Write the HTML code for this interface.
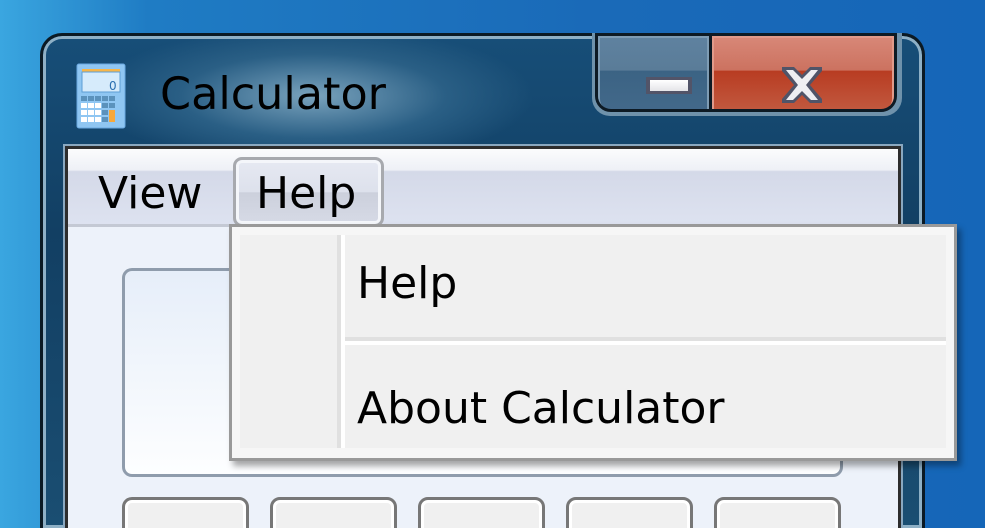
<!DOCTYPE html>
<html style="width:985px;height:528px;overflow:hidden"><head><style>
*{margin:0;padding:0;box-sizing:border-box}
body{width:985px;height:528px;overflow:hidden;position:relative;background:linear-gradient(90deg,#3aa6e0 0%,#1f7cc4 15%,#1a6ab8 60%,#1566b8 100%);font-family:"Liberation Sans","DejaVu Sans",sans-serif}
.abs{position:absolute}
.win{left:40px;top:33px;width:885px;height:495px;border:3px solid #0b1a24;border-bottom:0;border-radius:22px 22px 0 0;background:radial-gradient(ellipse 220px 70px at 270px 60px,#7aa3bd 0%,#2a5f85 60%,transparent 100%),linear-gradient(180deg,#174e78,#123f63 40%,#1a4e72);box-shadow:inset 0 0 0 3px #8eb0c6}
.title{left:160px;top:69px;font-family:"DejaVu Sans",sans-serif;font-size:44.5px;color:#000}
.client{left:65px;top:146px;width:836px;height:382px;border:3px solid #2d2d2d;border-bottom:0;background:#edf2fa;box-shadow:0 0 0 2px #8aa8c0;overflow:hidden}
.menubar{left:0;top:0;width:830px;height:78px;background:linear-gradient(180deg,#fbfcfd 0%,#eef0f6 28%,#d4d9e8 30%,#dde2f0 100%);border-bottom:3px solid #c4c9d4}
.mtxt{font-family:"DejaVu Sans",sans-serif;font-size:44px;color:#000;white-space:nowrap}
.drop{left:229px;top:224px;width:728px;height:237px;background:#f0f0f0;border:3px solid #999;box-shadow:4px 5px 6px rgba(0,0,0,.35)}
</style></head><body>
<div class="abs win"></div>
<svg class="abs" style="left:76px;top:63px" width="50" height="66" viewBox="0 0 50 66">
<rect x="1" y="1" width="48" height="64" rx="2" fill="#8fc6f2" stroke="#6aa8e0"/>
<rect x="6" y="6" width="38" height="3" fill="#f7b64a"/>
<rect x="6" y="9" width="38" height="20" fill="#d6ebfb" stroke="#5c9ed4"/>
<text x="33" y="27" font-size="12" fill="#2a6fb0" font-family="DejaVu Sans">0</text>
<g fill="#5b92bc"><rect x="5" y="33" width="6" height="5"/><rect x="12" y="33" width="6" height="5"/><rect x="19" y="33" width="6" height="5"/><rect x="26" y="33" width="6" height="5"/><rect x="33" y="33" width="6" height="5"/><rect x="26" y="40" width="6" height="5"/><rect x="33" y="40" width="6" height="5"/><rect x="26" y="47" width="6" height="5"/><rect x="26" y="54" width="6" height="5"/></g>
<g fill="#fff"><rect x="5" y="40" width="6" height="5"/><rect x="12" y="40" width="6" height="5"/><rect x="19" y="40" width="6" height="5"/><rect x="5" y="47" width="6" height="5"/><rect x="12" y="47" width="6" height="5"/><rect x="19" y="47" width="6" height="5"/><rect x="5" y="54" width="6" height="5"/><rect x="12" y="54" width="6" height="5"/><rect x="19" y="54" width="6" height="5"/></g>
<rect x="33" y="47" width="6" height="12" fill="#f7a83a"/>
</svg>
<div class="abs title">Calculator</div>
<div class="abs" style="left:592px;top:33px;width:310px;height:83px;border-radius:0 0 18px 18px;background:#6f92ab"></div>
<div class="abs" style="left:595px;top:33px;width:302px;height:79px;border:3px solid #0d1a24;border-radius:0 0 16px 16px;background:#0d1a24;overflow:hidden">
 <div class="abs" style="left:0;top:0;width:111px;height:76px;background:linear-gradient(180deg,#5f82a0 0%,#5a7c98 45%,#3b6384 46%,#43698a 100%);box-shadow:inset 0 0 0 2px #7e9cb4;border-bottom-left-radius:13px"></div>
 <div class="abs" style="left:114px;top:0;width:182px;height:76px;background:linear-gradient(180deg,#d88878 0%,#cc7260 45%,#b83c22 46%,#c25a40 100%);box-shadow:inset 0 0 0 2px #e09a8a;border-bottom-right-radius:13px"></div>
 <div class="abs" style="left:48px;top:41px;width:46px;height:17px;background:#525468"></div>
 <div class="abs" style="left:52px;top:44px;width:38px;height:11px;background:linear-gradient(#fff,#e4e4e8)"></div>
 <svg class="abs" style="left:182px;top:29px" width="44" height="40" viewBox="0 0 44 40">
  <path d="M2 2h12l8 8 8-8h12v4l-12 14 12 14v4H30l-8-8-8 8H2v-4l12-14L2 6z" fill="#505468"/>
  <path d="M6 5h7l9 9 9-9h7l-12 15 12 15h-7l-9-9-9 9H6l12-15z" fill="#eeeef2"/>
 </svg>
</div>
<div class="abs client">
 <div class="abs menubar"></div>
 <div class="abs mtxt" style="left:30px;top:19px">View</div>
 <div class="abs" style="left:165px;top:8px;width:151px;height:70px;border:3px solid #a7a9ae;border-radius:9px;box-shadow:inset 0 0 0 3px #f4f6fa;background:linear-gradient(180deg,#e6e9f2 0%,#dde1ec 50%,#ccd0dc 51%,#d6dae6 100%)"></div>
 <div class="abs mtxt" style="left:188px;top:19px">Help</div>
 <div class="abs" style="left:54px;top:119px;width:721px;height:209px;border:3px solid #8f9cac;border-radius:10px;background:linear-gradient(180deg,#e6eef9,#fdfeff)"></div>
 <div class="abs" style="left:54px;top:348px;width:127px;height:60px;border:3px solid #777;border-radius:10px;background:#f0f0f0;box-shadow:inset 0 0 0 3px #fff"></div>
 <div class="abs" style="left:202px;top:348px;width:127px;height:60px;border:3px solid #777;border-radius:10px;background:#f0f0f0;box-shadow:inset 0 0 0 3px #fff"></div>
 <div class="abs" style="left:350px;top:348px;width:127px;height:60px;border:3px solid #777;border-radius:10px;background:#f0f0f0;box-shadow:inset 0 0 0 3px #fff"></div>
 <div class="abs" style="left:498px;top:348px;width:127px;height:60px;border:3px solid #777;border-radius:10px;background:#f0f0f0;box-shadow:inset 0 0 0 3px #fff"></div>
 <div class="abs" style="left:646px;top:348px;width:127px;height:60px;border:3px solid #777;border-radius:10px;background:#f0f0f0;box-shadow:inset 0 0 0 3px #fff"></div>
</div>
<div class="abs drop">
 <div class="abs" style="left:0;top:0;width:722px;height:231px;border:8px solid #f6f6f6;border-bottom-width:10px"></div>
 <div class="abs" style="left:105px;top:8px;width:4px;height:213px;background:#e0e0e0"></div>
 <div class="abs" style="left:109px;top:8px;width:4px;height:213px;background:#fff"></div>
 <div class="abs" style="left:113px;top:110px;width:601px;height:4px;background:#e0e0e0"></div>
 <div class="abs" style="left:113px;top:114px;width:601px;height:4px;background:#fff"></div>
 <div class="abs mtxt" style="left:125px;top:31px">Help</div>
 <div class="abs mtxt" style="left:125px;top:156px">About Calculator</div>
</div>
</body></html>
